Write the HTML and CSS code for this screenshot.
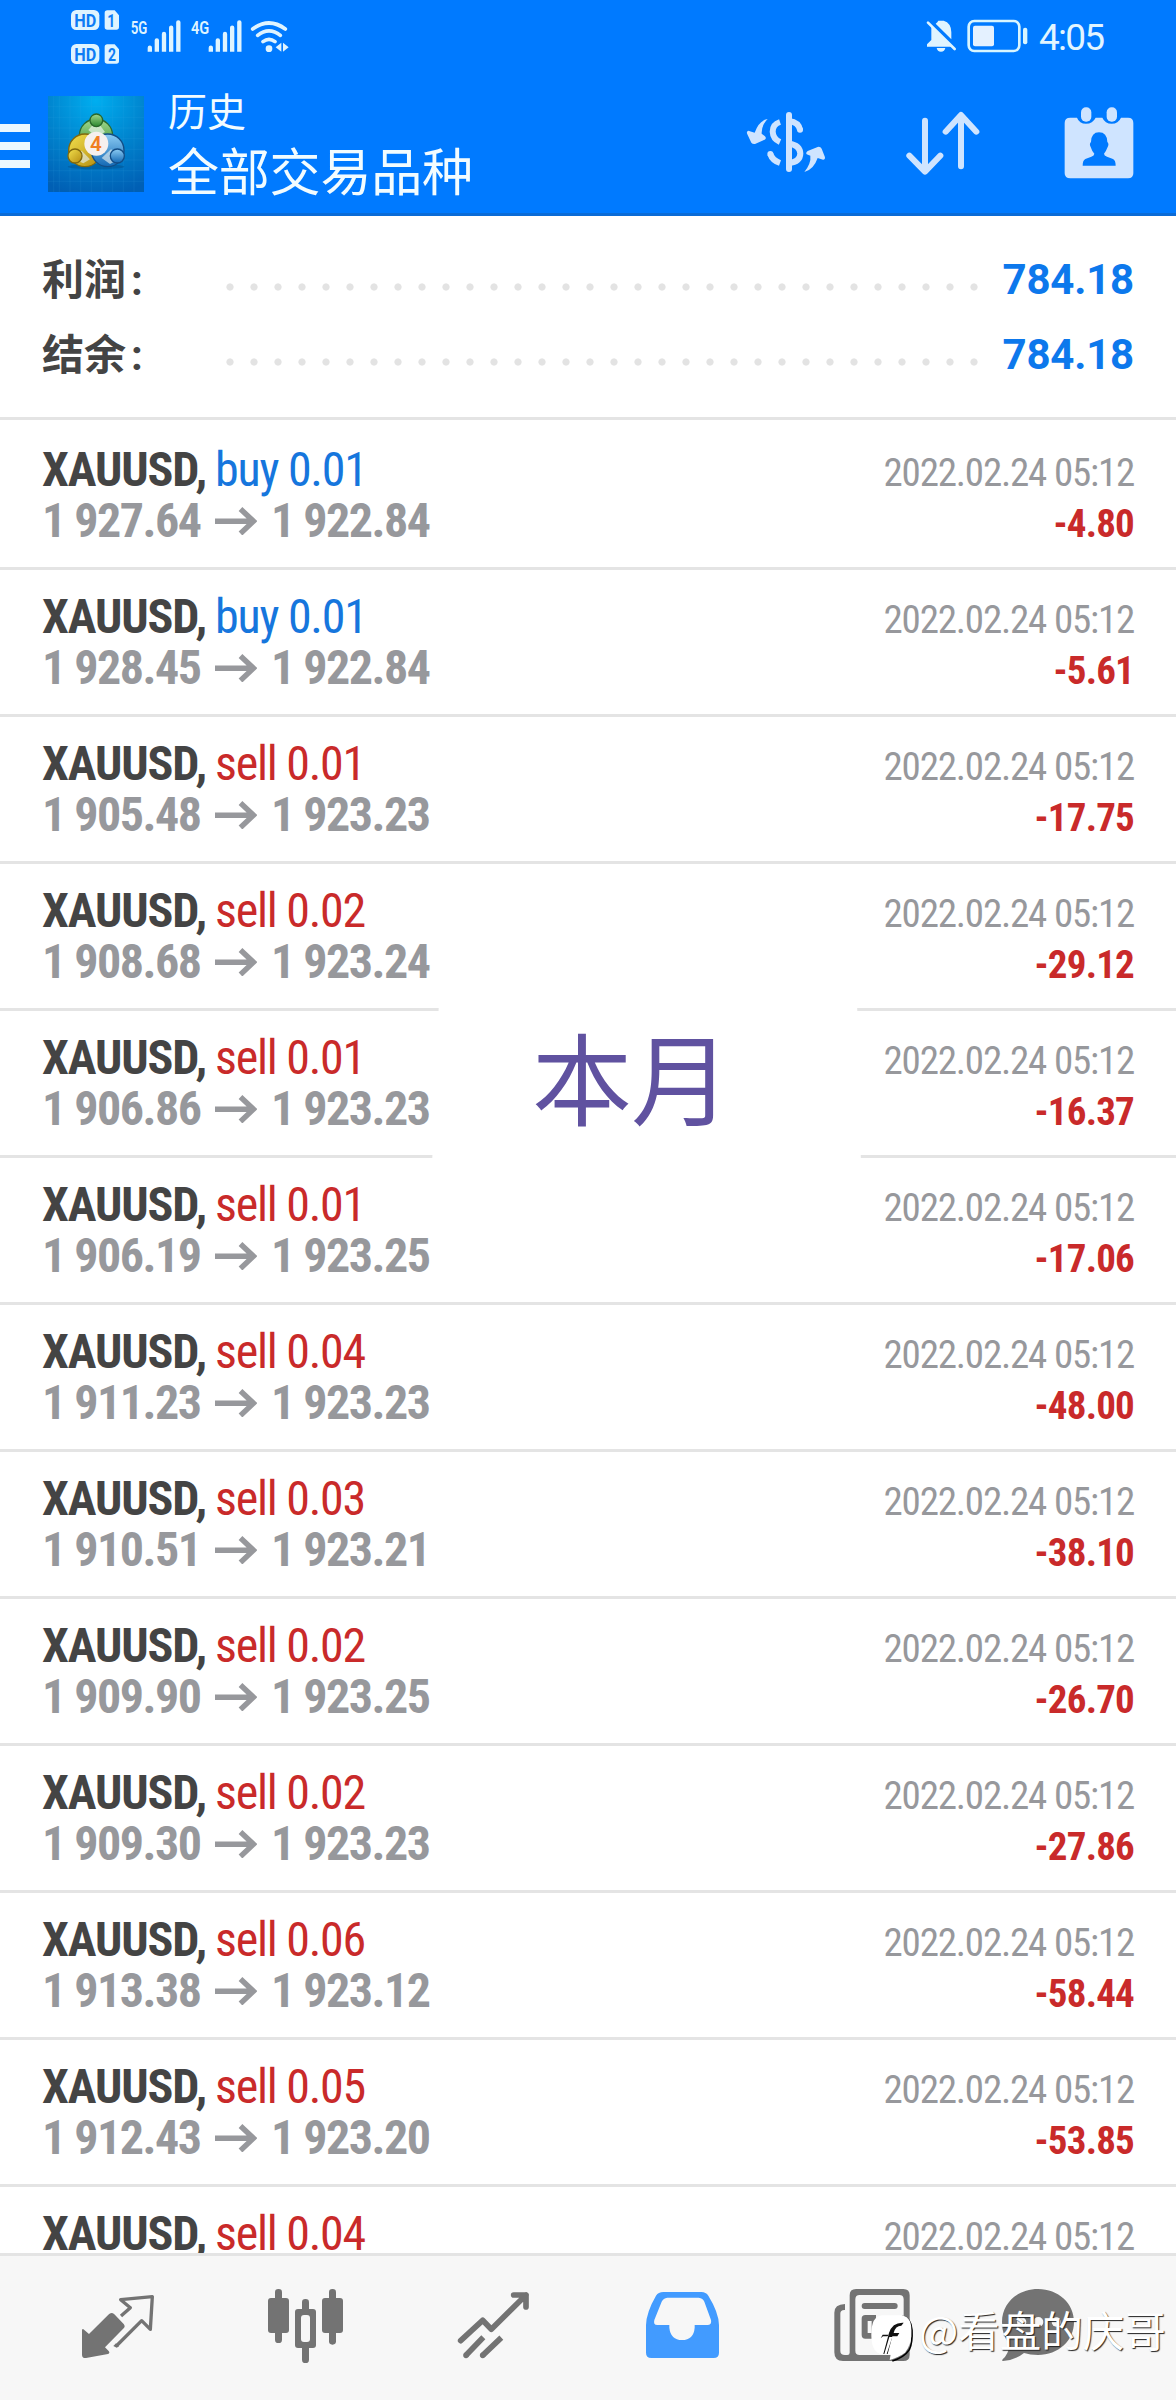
FILE: index.html
```html
<!DOCTYPE html>
<html lang="zh-CN">
<head>
<meta charset="utf-8">
<title>历史</title>
<link rel="stylesheet" href="styles.css">
</head>
<body>
<svg class="defs" width="0" height="0"><defs>
<symbol id="arrow" viewBox="0 0 42 28"><path d="M0 14.2H38M25.5 2L38.5 14.2L25.5 26.5" fill="none" stroke="#97989c" stroke-width="5.4"/></symbol>
</defs></svg>
<div class="screen">
<header class="header">
<div class="status">
<svg class="signals" width="220" height="60" viewBox="210 20 660 180">
<g fill="#dff4ff">
<rect x="213" y="29" width="85" height="60" rx="16"/><rect x="213" y="131" width="85" height="60" rx="16"/>
<path d="M322 30h22l13 15v35q0 8-8 8h-27q-8 0-8-8V38q0-8 8-8zM322 132h22l13 15v35q0 8-8 8h-27q-8 0-8-8v-42q0-8 8-8z"/>
<path d="M443 142a6.500 6.500 0 0 1 13 0v12h-13zM464 120a6.500 6.500 0 0 1 13 0v34h-13zM485.500 101a6.500 6.500 0 0 1 13 0v53h-13zM507 82a6.500 6.500 0 0 1 13 0v72h-13zM528.500 66a6.500 6.500 0 0 1 13 0v88h-13z"/>
<path d="M626 142a6.500 6.500 0 0 1 13 0v12h-13zM647 120a6.500 6.500 0 0 1 13 0v34h-13zM668.500 101a6.500 6.500 0 0 1 13 0v53h-13zM690 82a6.500 6.500 0 0 1 13 0v72h-13zM711.500 66a6.500 6.500 0 0 1 13 0v88h-13z"/>
<circle cx="807" cy="145" r="10"/><path d="M844 127v27l-17-13zM849 127v27l17-13z"/>
</g>
<g fill="none" stroke="#dff4ff" stroke-width="11" stroke-linecap="round"><path d="M758 86Q807 50 856 86M773 105Q807 78 841 105M789 124Q807 110 825 124"/></g>
<g fill="#0d7cf5" font-family="Roboto, sans-serif" font-weight="700" font-size="54"><text x="223" y="79" textLength="66" lengthAdjust="spacingAndGlyphs">HD</text><text x="223" y="181" textLength="66" lengthAdjust="spacingAndGlyphs">HD</text><text x="322" y="79" font-size="54" textLength="24" lengthAdjust="spacingAndGlyphs">1</text><text x="324" y="181" font-size="54" textLength="24" lengthAdjust="spacingAndGlyphs">2</text></g>
<g fill="#dff4ff" font-family="Roboto, sans-serif" font-weight="600" font-size="55"><text x="392" y="102" textLength="50" lengthAdjust="spacingAndGlyphs">5G</text><text x="573" y="102" textLength="55" lengthAdjust="spacingAndGlyphs">4G</text></g>
</svg>
<div class="status-right">
<svg width="104" height="36" viewBox="447 55 312 108">
<path d="M466 79L526 141H453V134L466 121zM479 72Q485 68 487 63H503Q526 70 526 98V119zM482 145H508Q506 156 495 156Q484 156 482 145z" fill="#dff4ff"/>
<path d="M456 69L536 148" stroke="#dff4ff" stroke-width="8" stroke-linecap="round"/>
<rect x="578" y="64" width="152" height="90" rx="17" fill="none" stroke="#d8f5ff" stroke-width="8"/><rect x="591" y="78" width="63" height="62" rx="6" fill="#e4f1ff"/><rect x="741" y="84" width="13" height="50" rx="6" fill="#d8f5ff"/>
</svg>
<span class="clock">4:05</span>
</div>
</div>
<div class="appbar">
<svg class="menu" width="30" height="44" viewBox="0 372 90 132"><path d="M0 372h90v24H0zM0 426h90v24H0zM0 480h90v24H0z" fill="#ebf8ff"/></svg>
<svg class="logo" width="96" height="96" viewBox="144 288 288 288">
<defs><radialGradient id="lb" cx=".5" cy=".05" r="1"><stop offset="0" stop-color="#00aef0"/><stop offset=".5" stop-color="#0085cf"/><stop offset="1" stop-color="#005fb4"/></radialGradient>
<linearGradient id="lg" x2="0" y2="1"><stop stop-color="#a4d98d"/><stop offset="1" stop-color="#28862e"/></linearGradient>
<linearGradient id="ly" x2="1" y2="1"><stop stop-color="#f2e14e"/><stop offset="1" stop-color="#b58b10"/></linearGradient>
<linearGradient id="lu" x2="0" y2="1"><stop stop-color="#8cccf4"/><stop offset="1" stop-color="#1268b4"/></linearGradient></defs>
<path fill="url(#lb)" d="M144 288h288v288H144z"/>
<path d="M161 288v288M178 288v288M210 288v288M242 288v288M274 288v288M306 288v288M338 288v288M370 288v288M402 288v288M144 320h288M144 352h288M144 384h288M144 416h288M144 448h288M144 480h288M144 512h288M144 544h288" stroke="#46b8ee" stroke-opacity=".22" stroke-width="1.500"/>
<ellipse cx="288" cy="500" rx="85" ry="8" fill="#00497f" opacity=".4"/>
<g stroke-width="4"><circle cx="288" cy="407" r="50" fill="url(#lg)" stroke="#2b6b31"/><circle cx="255" cy="451" r="49" fill="url(#ly)" stroke="#80680d"/><circle cx="323" cy="451" r="49" fill="url(#lu)" stroke="#124d86"/>
<path d="M205 470L245 452L270 478L250 490zM371 470L333 448L305 474L330 492z" fill="#e2edf0" opacity=".65"/>
<path d="M265 390L280 373H298L315 396L288 410z" fill="#dcefdc" opacity=".8"/>
<circle cx="289" cy="361" r="19" fill="url(#lg)" stroke="#28662b"/><circle cx="225" cy="468" r="21" fill="url(#ly)" stroke="#80680d"/><circle cx="352" cy="468" r="21" fill="url(#lu)" stroke="#124d86"/></g>
<circle cx="289" cy="431" r="36" fill="#f5f0ee"/><text x="288" y="453" text-anchor="middle" font-family="Roboto, sans-serif" font-size="62" font-weight="600" fill="#f07e22">4</text>
</svg>
<div class="titles"><span class="title-small">历史</span><span class="title-big">全部交易品种</span></div>
<div class="actions">
<svg width="82" height="64" viewBox="1035 330 246 192">
<path fill="#cfe4ff" d="M1103 357Q1077 361 1064 398L1045 392Q1038 395 1042 403L1054 428Q1058 433 1065 432L1094 419Q1101 414 1094 408L1085 401Q1084 376 1103 357z"/>
<path fill="#cfe4ff" d="M1213 516Q1234 489 1231 467L1220 463Q1216 459 1223 453L1253 441Q1261 439 1265 446L1275 472Q1276 480 1269 479L1253 474Q1241 509 1213 516z"/>
<g fill="none" stroke="#cfe4ff" stroke-width="18"><path d="M1167 345V507" stroke-linecap="round"/><path d="M1140 366Q1118 373 1118 395Q1119 417 1140 426M1111 462Q1117 481 1140 489"/><path d="M1111 462h.1M1200 389h.1" stroke-linecap="round"/><path d="M1167 363Q1196 367 1200 389M1167 431Q1200 435 1201 461Q1200 486 1167 489"/></g></svg>
<svg width="76" height="66" viewBox="384 330 228 198"><path d="M444 362V514M397 467L444 515L490 467M552 499V346M506 395L552 345L598 395" fill="none" stroke="#cfe4ff" stroke-width="18" stroke-linecap="round" stroke-linejoin="round"/></svg>
<svg width="70" height="74" viewBox="861 318 210 222"><path d="M880 353H900Q907 371 927 371Q947 371 956 353H976Q984 371 1004 371Q1024 371 1032 353H1053Q1069 353 1069 369V520Q1069 535 1053 535H880Q863 535 863 520V369Q863 353 880 353z" fill="#cfe4ff"/><rect x="912" y="322" width="31" height="43" rx="15" fill="#cfe4ff"/><rect x="989" y="322" width="31" height="43" rx="15" fill="#cfe4ff"/><path d="M966 397Q990 397 991 426Q997 432 992 441Q987 454 981 461Q981 467 990 470L1008 477Q1016 481 1016 497H917Q917 481 925 477L943 470Q952 467 952 461Q945 454 941 441Q936 432 942 426Q943 397 966 397z" fill="#007aff"/></svg>
</div>
</div>
</header>
<section class="summary">
<div class="sum-row"><span class="sum-label">利润<i>:</i></span><span class="dots"></span><span class="sum-value">784.18</span></div>
<div class="sum-row"><span class="sum-label">结余<i>:</i></span><span class="dots"></span><span class="sum-value">784.18</span></div>
</section>
<main class="deals">
<article class="deal"><div class="line"><b class="sym">XAUUSD,</b><span class="side buy">buy 0.01</span><time>2022.02.24 05:12</time></div><div class="line"><span class="price">1 927.64</span><svg class="arrow"><use href="#arrow"/></svg><span class="price">1 922.84</span><span class="profit">-4.80</span></div></article>
<article class="deal"><div class="line"><b class="sym">XAUUSD,</b><span class="side buy">buy 0.01</span><time>2022.02.24 05:12</time></div><div class="line"><span class="price">1 928.45</span><svg class="arrow"><use href="#arrow"/></svg><span class="price">1 922.84</span><span class="profit">-5.61</span></div></article>
<article class="deal"><div class="line"><b class="sym">XAUUSD,</b><span class="side sell">sell 0.01</span><time>2022.02.24 05:12</time></div><div class="line"><span class="price">1 905.48</span><svg class="arrow"><use href="#arrow"/></svg><span class="price">1 923.23</span><span class="profit">-17.75</span></div></article>
<article class="deal"><div class="line"><b class="sym">XAUUSD,</b><span class="side sell">sell 0.02</span><time>2022.02.24 05:12</time></div><div class="line"><span class="price">1 908.68</span><svg class="arrow"><use href="#arrow"/></svg><span class="price">1 923.24</span><span class="profit">-29.12</span></div></article>
<article class="deal"><div class="line"><b class="sym">XAUUSD,</b><span class="side sell">sell 0.01</span><time>2022.02.24 05:12</time></div><div class="line"><span class="price">1 906.86</span><svg class="arrow"><use href="#arrow"/></svg><span class="price">1 923.23</span><span class="profit">-16.37</span></div></article>
<article class="deal"><div class="line"><b class="sym">XAUUSD,</b><span class="side sell">sell 0.01</span><time>2022.02.24 05:12</time></div><div class="line"><span class="price">1 906.19</span><svg class="arrow"><use href="#arrow"/></svg><span class="price">1 923.25</span><span class="profit">-17.06</span></div></article>
<article class="deal"><div class="line"><b class="sym">XAUUSD,</b><span class="side sell">sell 0.04</span><time>2022.02.24 05:12</time></div><div class="line"><span class="price">1 911.23</span><svg class="arrow"><use href="#arrow"/></svg><span class="price">1 923.23</span><span class="profit">-48.00</span></div></article>
<article class="deal"><div class="line"><b class="sym">XAUUSD,</b><span class="side sell">sell 0.03</span><time>2022.02.24 05:12</time></div><div class="line"><span class="price">1 910.51</span><svg class="arrow"><use href="#arrow"/></svg><span class="price">1 923.21</span><span class="profit">-38.10</span></div></article>
<article class="deal"><div class="line"><b class="sym">XAUUSD,</b><span class="side sell">sell 0.02</span><time>2022.02.24 05:12</time></div><div class="line"><span class="price">1 909.90</span><svg class="arrow"><use href="#arrow"/></svg><span class="price">1 923.25</span><span class="profit">-26.70</span></div></article>
<article class="deal"><div class="line"><b class="sym">XAUUSD,</b><span class="side sell">sell 0.02</span><time>2022.02.24 05:12</time></div><div class="line"><span class="price">1 909.30</span><svg class="arrow"><use href="#arrow"/></svg><span class="price">1 923.23</span><span class="profit">-27.86</span></div></article>
<article class="deal"><div class="line"><b class="sym">XAUUSD,</b><span class="side sell">sell 0.06</span><time>2022.02.24 05:12</time></div><div class="line"><span class="price">1 913.38</span><svg class="arrow"><use href="#arrow"/></svg><span class="price">1 923.12</span><span class="profit">-58.44</span></div></article>
<article class="deal"><div class="line"><b class="sym">XAUUSD,</b><span class="side sell">sell 0.05</span><time>2022.02.24 05:12</time></div><div class="line"><span class="price">1 912.43</span><svg class="arrow"><use href="#arrow"/></svg><span class="price">1 923.20</span><span class="profit">-53.85</span></div></article>
<article class="deal"><div class="line"><b class="sym">XAUUSD,</b><span class="side sell">sell 0.04</span><time>2022.02.24 05:12</time></div></article>
</main>
<nav class="tabs">
<svg viewBox="72 228 564 432"><path fill="#737373" d="M246 451Q247 444 253 450L267 462L325 404Q334 395 343 403L371 432Q377 439 371 445L315 502L326 513Q331 519 324 522L258 534Q246 535 246 524z"/><path fill="none" stroke="#737373" stroke-width="10" stroke-linejoin="round" d="M363 408L391 383L362 359L457 350L451 448L425 422L349 498"/><path d="M340 498l8-8 9 9-7 4z" fill="#737373"/></svg>
<svg viewBox="636 228 564 432"><g fill="#737373"><rect x="825" y="327" width="21" height="162" rx="10"/><rect x="804" y="354" width="63" height="105" rx="9"/><rect x="987" y="327" width="21" height="167" rx="10"/><rect x="966" y="354" width="63" height="105" rx="9"/><rect x="906" y="357" width="21" height="192" rx="10"/><rect x="885" y="387" width="63" height="117" rx="9"/></g><rect x="903" y="405" width="27" height="81" rx="9" fill="#f7f7f7"/></svg>
<svg viewBox="0 228 564 432"><g fill="none" stroke="#737373" stroke-width="17"><path d="M182 482L248 421L274 448L378 345M341 345H378V381" stroke-linecap="round" stroke-linejoin="round"/><path d="M198 526L250 472M248 526L304 473"/><path d="M198 526h.1M248 526h.1" stroke-linecap="round"/></g></svg>
<svg viewBox="564 228 564 432"><path fill="#429bff" fill-rule="evenodd" d="M790 336H904Q918 336 925 347Q956 397 957 435V518Q957 534 941 534H754Q738 534 738 518V435Q739 397 768 347Q775 336 790 336zM802 353Q790 354 785 365L763 420Q759 435 772 435H808V443Q812 480 846 480Q881 480 884 443V435H922Q936 435 933 420L913 365Q909 354 896 353z"/></svg>
<svg viewBox="0 228 564 432"><path fill="#737373" fill-rule="evenodd" d="M240 327H382Q401 327 401 346V524Q401 543 382 543H201Q175 543 175 517V398Q175 373 207 372V390Q193 389 193 401V513Q193 525 207 525H214Q221 525 221 518V346Q221 327 240 327zM251 345Q238 345 238 358V512Q238 525 251 525H370Q383 525 383 512V358Q383 345 370 345z"/><rect x="257" y="369" width="108" height="18" rx="9" fill="#737373"/><path d="M268 405H300V476H268Q257 476 257 465V416Q257 405 268 405zM300 459h65v17h-65z" fill="#737373"/><path d="M275 423h12v36h-12z" fill="#f7f7f7"/></svg>
<svg viewBox="564 228 444 432"><path fill="#737373" d="M786 327C847 327 894 370 894 426C894 482 847 525 786 525Q762 525 744 519Q720 539 681 543Q677 543 680 538Q696 524 702 494Q678 469 678 426C678 370 725 327 786 327z"/><circle cx="737" cy="426" r="14" fill="#f7f7f7"/><circle cx="787" cy="426" r="15" fill="#f7f7f7"/><circle cx="841" cy="426" r="14" fill="#f7f7f7"/></svg>
</nav>
<div class="note">本月</div>
<div class="watermark"><svg width="45" height="50" viewBox="283 402 135 150"><path d="M350 543Q386 532 401 509Q411 488 409 450Q406 414 380 409" fill="none" stroke="#000" stroke-width="5"/><path d="M320 406H372Q407 407 407 448Q409 495 388 518Q370 531 342 540L345 523H321Q287 520 287 466Q286 408 320 406z" fill="#fff"/><path d="M323 522L340 459Q350 426 384 428L377 437Q359 437 354 459H371L365 469H350L336 522zM315 475L321 464H338L336 469H322z" fill="#111"/><path d="M326 522L341 471H350L333 522z" fill="#fff"/></svg><span>@看盘的庆哥</span></div>
</div>
</body>
</html>
```
FILE: styles.css
```css
* { box-sizing: border-box; }
body { margin: 0; background: #fff; font-family: Roboto, "Noto Sans CJK SC", sans-serif; }
svg { display: block; flex: none; }
.defs { position: absolute; }
.screen { position: relative; width: 1176px; height: 2400px; overflow: hidden; display: flex; flex-direction: column; background: #fff; }

.header { height: 216px; flex: none; background: #007aff; border-bottom: 3px solid #0b6bd6; }
.status { height: 72px; display: flex; justify-content: space-between; align-items: flex-start; padding: 7px 71px 0 70px; }
.status-right { display: flex; align-items: flex-start; padding-top: 11px; gap: 10px; }
.clock { color: #e2f5ff; font-size: 37px; line-height: 44px; width: 66px; margin-top: -2px; letter-spacing: -1.8px; }
.appbar { height: 141px; display: flex; align-items: flex-start; }
.menu { margin-top: 52px; }
.logo { margin: 24px 0 0 18px; }
.titles { display: flex; flex-direction: column; margin: 13px 0 0 24px; color: #f2fcff; white-space: nowrap; }
.title-small { font-size: 39px; line-height: 56px; }
.title-big { font-size: 51px; line-height: 66px; letter-spacing: -.2px; }
.actions { margin-left: auto; display: flex; align-items: flex-start; padding: 34px 42px 0 0; gap: 77px; }
.actions svg:nth-child(1) { margin: 4px 1px 0 0; }
.actions svg:nth-child(2) { margin-top: 4px; }
.actions svg:nth-child(3) { margin-left: 6px; }

.summary { height: 204px; flex: none; padding: 26px 42px 0; border-bottom: 3px solid #e4e4e4; }
.sum-row { display: flex; height: 75px; line-height: 75px; font-size: 42px; font-weight: 700; }
.sum-label { width: 176px; color: #444; padding-top: 1px; }
.sum-label i { font-style: normal; margin-left: 5px; }
.dots { width: 768px; height: 8px; margin-top: 41px; background: radial-gradient(circle at 12px 4px, #e3e3e3 3.2px, transparent 4px) 0 0 / 24px 8px; }
.sum-value { margin-left: auto; color: #0d78ec; letter-spacing: -.2px; }

.deals { flex: 1; min-height: 0; overflow: hidden; }
.deal { height: 147px; padding: 21px 42px 0; border-top: 3px solid #e4e4e4; font-family: "Roboto Condensed", Roboto, sans-serif; font-stretch: 75%; white-space: nowrap; }
.deal:first-child { border-top-color: transparent; }
.line { height: 51px; line-height: 51px; font-size: 48px; display: flex; align-items: baseline; }
.sym { color: #444; width: 173px; letter-spacing: -1.1px; }
.side { letter-spacing: -1.25px; }
.buy { color: #1676dd; }
.sell { color: #c92a2a; }
time { margin: 0 -1px 0 auto; padding-right: 1px; color: #97989c; font-size: 39px; letter-spacing: -1.2px; }
.price { color: #97989c; font-weight: 700; width: 159px; letter-spacing: -1.5px; }
.arrow { width: 42px; height: 28px; margin: 0 14px; align-self: center; }
.profit { margin-left: auto; color: #c92a2a; font-weight: 700; font-size: 39px; letter-spacing: -.8px; }

.tabs { height: 147px; flex: none; border-top: 3px solid #e4e4e4; background: #f7f7f7; display: grid; grid-template-columns: repeat(5, 188px) 148px; padding-left: 24px; }
.tabs svg { width: 100%; height: 144px; }

.note { position: absolute; left: 432px; top: 1000px; width: 430px; height: 165px; padding-left: 100px; background: #fff; clip-path: polygon(7px 0, 425px 0, 429px 100%, 0 100%); color: #6052a0; font-family: "Noto Sans CJK SC", sans-serif; font-size: 100px; line-height: 150px; letter-spacing: -1px; white-space: nowrap; }
.watermark { position: absolute; left: 870px; top: 2314px; display: flex; align-items: flex-start; color: #fff; font: 400 41.500px/44px "Noto Sans CJK SC", sans-serif; text-shadow: 1px 1px 1px #222; white-space: nowrap; }
.watermark span { margin-left: 4px; margin-top: -7px; }
```
